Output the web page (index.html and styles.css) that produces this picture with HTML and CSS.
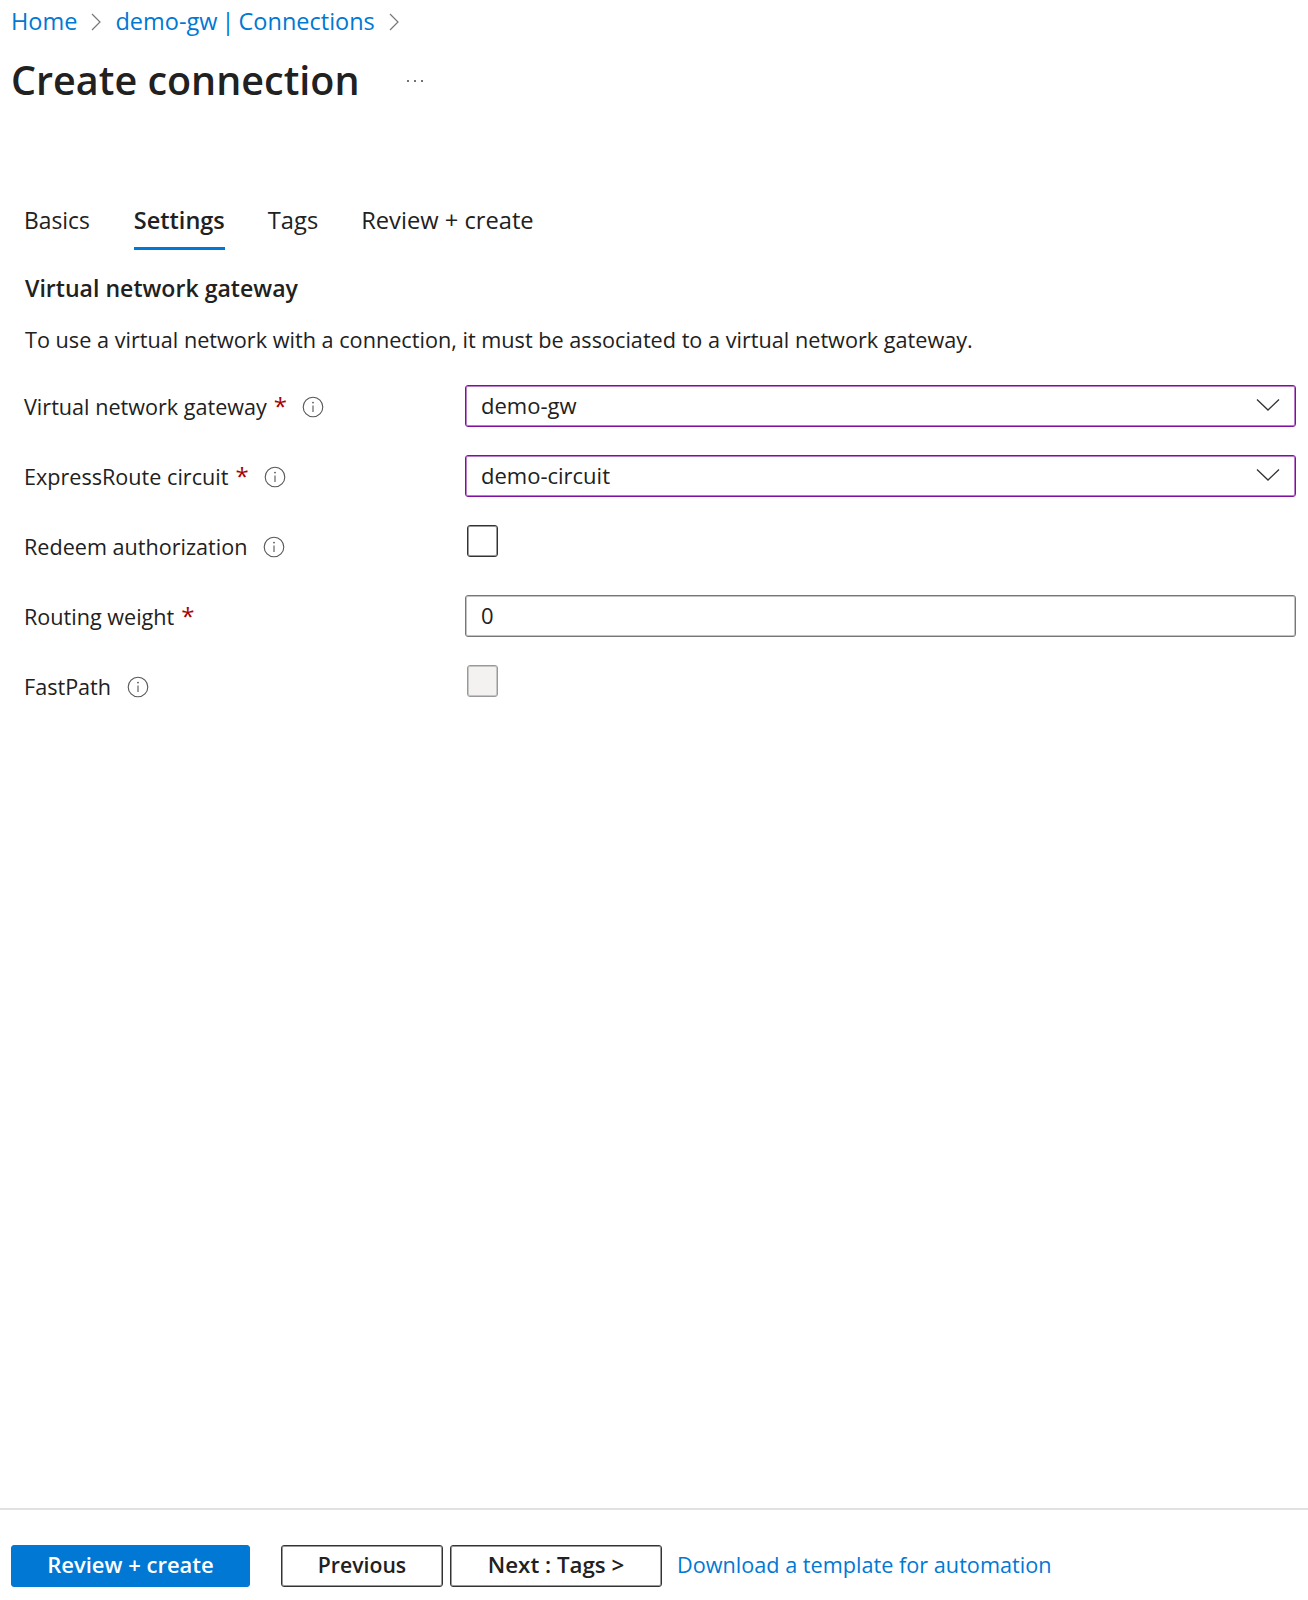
FILE: index.html
```html
<!DOCTYPE html>
<html lang="en">
<head>
<meta charset="utf-8">
<title>Create connection</title>
<link rel="stylesheet" href="styles.css">
</head>
<body>
<div class="page">
  <main class="main">
    <nav class="crumbs">
      <a class="link">Home</a>
      <svg class="crumb-sep" viewBox="0 0 10 18"><path d="M1 1 L9 9 L1 17"/></svg>
      <a class="link crumb-long">demo-gw | Connections</a>
      <svg class="crumb-sep" viewBox="0 0 10 18"><path d="M1 1 L9 9 L1 17"/></svg>
    </nav>
    <header class="title-row">
      <h1 class="title">Create connection</h1>
      <span class="more"><i></i><i></i><i></i></span>
    </header>
    <div class="tabs">
      <span class="tab tab-first">Basics</span>
      <span class="tab tab-active">Settings</span>
      <span class="tab">Tags</span>
      <span class="tab">Review + create</span>
    </div>
    <h2 class="section">Virtual network gateway</h2>
    <p class="desc">To use a virtual network with a connection, it must be associated to a virtual network gateway.</p>
    <div class="form">
      <div class="row">
        <label class="label"><span>Virtual network gateway</span><span class="req">*</span>
          <svg class="info" viewBox="0 0 22 22"><circle cx="11" cy="11" r="9.8"/><path d="M11 9.5 V16"/><circle class="dot" cx="11" cy="6.6" r="0.9"/></svg></label>
        <div class="field field-select"><span>demo-gw</span><svg class="chev" viewBox="0 0 24 14"><path d="M1 1.5 L12 12 L23 1.5"/></svg></div>
      </div>
      <div class="row">
        <label class="label"><span>ExpressRoute circuit</span><span class="req">*</span>
          <svg class="info" viewBox="0 0 22 22"><circle cx="11" cy="11" r="9.8"/><path d="M11 9.5 V16"/><circle class="dot" cx="11" cy="6.6" r="0.9"/></svg></label>
        <div class="field field-select"><span>demo-circuit</span><svg class="chev" viewBox="0 0 24 14"><path d="M1 1.5 L12 12 L23 1.5"/></svg></div>
      </div>
      <div class="row">
        <label class="label"><span>Redeem authorization</span>
          <svg class="info" viewBox="0 0 22 22"><circle cx="11" cy="11" r="9.8"/><path d="M11 9.5 V16"/><circle class="dot" cx="11" cy="6.6" r="0.9"/></svg></label>
        <div class="check-cell"><span class="check"></span></div>
      </div>
      <div class="row">
        <label class="label"><span>Routing weight</span><span class="req">*</span></label>
        <div class="field field-plain"><span>0</span></div>
      </div>
      <div class="row">
        <label class="label"><span>FastPath</span>
          <svg class="info" viewBox="0 0 22 22"><circle cx="11" cy="11" r="9.8"/><path d="M11 9.5 V16"/><circle class="dot" cx="11" cy="6.6" r="0.9"/></svg></label>
        <div class="check-cell"><span class="check check-disabled"></span></div>
      </div>
    </div>
  </main>
  <footer class="footer">
    <button class="btn btn-primary">Review + create</button>
    <button class="btn btn-prev">Previous</button>
    <button class="btn btn-next">Next : Tags &gt;</button>
    <a class="link footer-link">Download a template for automation</a>
  </footer>
</div>
</body>
</html>
```
FILE: styles.css
```css
* { box-sizing: border-box; }
html, body { margin: 0; padding: 0; background: #fff; }
body { font-family: "Open Sans", "Noto Sans", sans-serif; color: #212121; font-size: 22px; }
.page { height: 1600px; display: flex; flex-direction: column; overflow: hidden; }
.main { flex: 1; padding: 0 12px 0 11px; }
.link { color: #0078d4; }
.crumbs { display: flex; align-items: center; height: 42px; font-size: 23.5px; }
.crumb-long { word-spacing: -2px; }
.crumb-sep { width: 10px; height: 18px; margin: 2px 14px 0; fill: none; stroke: #777; stroke-width: 1.2; }
.title-row { display: flex; align-items: center; height: 76px; }
.title { margin: 0; font-size: 39.5px; font-weight: 600; color: #212121; }
.more { display: flex; gap: 5px; margin: 2px 0 0 47px; }
.more i { width: 2px; height: 2px; background: #444; border-radius: 50%; }
.tabs { display: flex; gap: 43px; margin: 82px 0 0 13px; height: 50px; align-items: flex-start; }
.tab { height: 50px; padding-top: 4px; font-size: 23.7px; border-bottom: 3px solid transparent; }
.tab-first { font-size: 22.8px; padding-top: 5px; margin-right: 1px; }
.tab-active { font-weight: 600; font-size: 23.5px; border-bottom-color: #0078d4; }
.section { margin: 20px 0 0 14px; font-size: 23.1px; font-weight: 600; line-height: 36px; }
.desc { margin: 16px 0 0 14px; font-size: 21.67px; line-height: 36px; }
.form { margin: 27px 0 0 13px; display: flex; flex-direction: column; gap: 28px; }
.row { display: flex; align-items: center; height: 42px; }
.label { width: 441px; display: flex; align-items: center; font-size: 21.6px; }
.req { color: #a80000; font-size: 24px; line-height: 1; margin: 0 15px 0 7px; }
.info { width: 22px; height: 22px; margin: 2px 0 0 16px; fill: none; stroke: #555; stroke-width: 1.1; }
.req + .info { margin-left: 0; }
.info .dot { fill: #555; stroke: none; }
.field { flex: 1; height: 42px; border: 1px solid #777; box-shadow: inset 0 0 0 1px rgba(119, 119, 119, 0.45); border-radius: 3px; display: flex; align-items: center; justify-content: space-between; padding: 0 15px 2px; }
.field-select { border-color: #7f0f9f; box-shadow: inset 0 0 0 1px rgba(127, 15, 159, 0.55); }
.field-plain { padding-bottom: 3px; }
.chev { width: 24px; height: 14px; fill: none; stroke: #333; stroke-width: 1.3; }
.check-cell { flex: 1; padding-left: 2px; }
.check { display: block; width: 31px; height: 32px; border: 1px solid #333; box-shadow: inset 0 0 0 1px rgba(51, 51, 51, 0.5); border-radius: 3px; margin-top: -10px; }
.check-disabled { background: #f3f2f1; border-color: #999; box-shadow: inset 0 0 0 1px rgba(153, 153, 153, 0.5); }
.footer { height: 92px; flex: none; border-top: 2px solid #e1e1e1; display: flex; align-items: flex-start; padding: 35px 0 0 11px; }
.btn { height: 42px; font: inherit; font-size: 22px; font-weight: 600; border-radius: 3px; background: #fff; border: 1px solid #333; box-shadow: inset 0 0 0 1px rgba(51, 51, 51, 0.5); color: #212121; padding: 0 0 4px; }
.btn-primary { width: 239px; background: #0078d4; border-color: #0078d4; box-shadow: none; color: #fff; margin-right: 31px; }
.btn-prev { width: 162px; margin-right: 7px; font-size: 21.2px; padding-bottom: 3px; }
.btn-next { width: 212px; margin-right: 15px; font-size: 22.3px; }
.footer-link { line-height: 39px; font-size: 21.67px; }
```
